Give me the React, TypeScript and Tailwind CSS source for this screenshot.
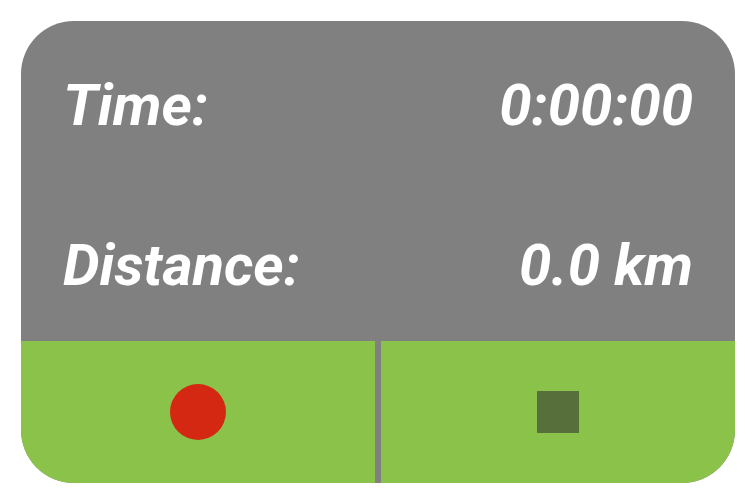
function Stat({ label, value }: { label: string; value: string }) {
  return (
    <div className="flex h-40 items-center justify-between px-[42px] pt-2 text-[58px] leading-[60px]">
      <dt>{label}</dt>
      <dd>{value}</dd>
    </div>
  );
}

export default function App() {
  return (
    <main className="min-h-screen bg-white p-[21px] font-[Roboto,sans-serif]">
      <section className="overflow-hidden rounded-[53px] bg-[#808080]">
        <dl className="font-bold text-white italic">
          <Stat label="Time:" value="0:00:00" />
          <Stat label="Distance:" value="0.0 km" />
        </dl>
        <div className="grid grid-cols-2 gap-[6px]">
          <button type="button" aria-label="Record" className="flex h-[142px] items-center justify-center bg-[#8bc34a]">
            <span className="size-14 rounded-full bg-[#d42812]" />
          </button>
          <button type="button" aria-label="Stop" className="flex h-[142px] items-center justify-center bg-[#8bc34a]">
            <span className="size-[42px] bg-[#566f3b]" />
          </button>
        </div>
      </section>
    </main>
  );
}
